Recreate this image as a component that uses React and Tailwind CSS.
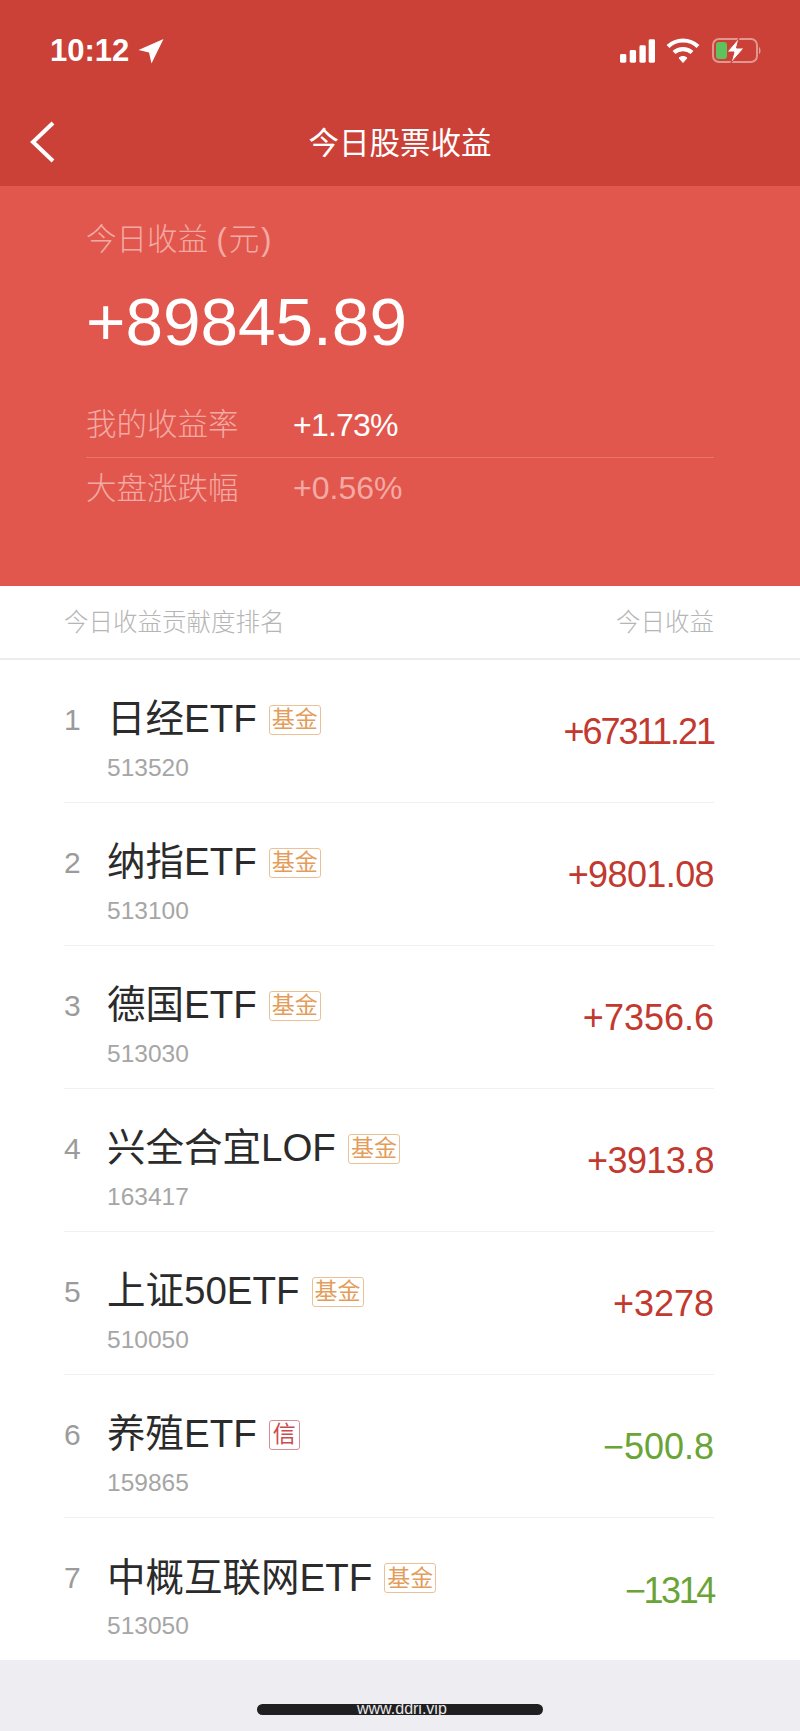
const latin = 'font-["Liberation_Sans","Noto_Sans_CJK_SC",sans-serif]';

// the 1 is narrow in the app's number font, so amounts with 1s get tighter tracking
const rows = [
    { rank: 1, name: '日经ETF', tag: '基金', code: '513520', amount: '+67311.21', tight: 'tracking-[-2px]' },
    { rank: 2, name: '纳指ETF', tag: '基金', code: '513100', amount: '+9801.08', tight: 'tracking-[-0.6px]' },
    { rank: 3, name: '德国ETF', tag: '基金', code: '513030', amount: '+7356.6' },
    { rank: 4, name: '兴全合宜LOF', tag: '基金', code: '163417', amount: '+3913.8', tight: 'tracking-[-0.6px]' },
    { rank: 5, name: '上证50ETF', tag: '基金', code: '510050', amount: '+3278' },
    { rank: 6, name: '养殖ETF', tag: '信', code: '159865', amount: '−500.8', down: true },
    { rank: 7, name: '中概互联网ETF', tag: '基金', code: '513050', amount: '−1314', down: true, tight: 'tracking-[-2.4px]' },
];

function StatusIcons() {
    return (
        <div className="flex items-center">
            <svg className="mr-[11px]" width="35" height="24" viewBox="0 0 36 24" fill="white">
                <rect x="0" y="15" width="6.5" height="9" rx="1.5" />
                <rect x="10" y="11" width="6.5" height="13" rx="1.5" />
                <rect x="20" y="6" width="6.5" height="18" rx="1.5" />
                <rect x="29.5" y="0" width="6.5" height="24" rx="1.5" />
            </svg>
            <svg className="mr-[12px]" width="34" height="25" viewBox="0 0 34 25" fill="none" stroke="white" strokeWidth="4.2">
                <path d="M2 8.5C10.5 0.5 23.5 0.5 32 8.5" />
                <path d="M8 14.5C13 10 21 10 26 14.5" />
                <path d="M13 20L17 24.5L21 20C19 18 15 18 13 20Z" fill="white" strokeWidth="1" />
            </svg>
            <svg width="50" height="25" viewBox="0 0 50 25" fill="none">
                <rect x="1" y="1" width="44" height="23" rx="6" stroke="white" strokeOpacity="0.45" strokeWidth="2" />
                <rect x="4" y="4" width="11" height="17" rx="3" fill="#5fc25c" />
                <path d="M47 9C49 10 49 15 47 16Z" fill="white" fillOpacity="0.5" />
                <path d="M27 0L15 14H22L19 25L32 10H24.5Z" fill="white" stroke="#cb4138" strokeWidth="1" />
            </svg>
        </div>
    );
}

function Row({ row, last }) {
    const orange = row.tag === '基金';
    return (
        <div className={`h-[143px] flex items-center justify-between ${last ? '' : 'border-b border-[#f1f1f1]'}`}>
            <div className="flex items-start pt-[14px]">
                <div className="w-[43px] h-[52px] flex items-center text-[30px] leading-none text-[#9b9b9b]">{row.rank}</div>
                <div>
                    <div className="h-[52px] flex items-center gap-[12px]">
                        <span className="text-[38.5px] leading-none text-[#2b2b2b]">{row.name}</span>
                        <span
                            className={`h-[30px] flex items-center justify-center rounded-[3px] border-[1.5px] text-[23px] leading-none ${
                                orange
                                    ? 'w-[52px] border-[#ecc197] text-[#e39c5a]'
                                    : 'w-[31px] border-[#d98c8f] text-[#cc4a4d]'
                            }`}
                        >
                            {row.tag}
                        </span>
                    </div>
                    <div className="mt-[7px] text-[24.5px] leading-[30px] text-[#a6a6a6]">{row.code}</div>
                </div>
            </div>
            <div className={`pt-[2px] text-[36px] leading-none ${row.tight ?? ''} ${row.down ? 'text-[#6aa437]' : 'text-[#c1392f]'}`}>
                {row.amount}
            </div>
        </div>
    );
}

export default function App() {
    return (
        <div className={`w-[800px] h-[1731px] overflow-hidden bg-[#eeeef2] ${latin}`}>
            <header className="h-[186px] bg-[#cb4138] text-white">
                <div className="h-[99px] pt-[38px] pl-[50px] pr-[38px] flex items-start justify-between">
                    <div className="flex items-center gap-[9px]">
                        <span className="text-[31px] leading-[26px] font-bold">10:12</span>
                        <svg width="26" height="26" viewBox="0 0 26 26" fill="white">
                            <path d="M25.5 1L13.5 25.5L11 14.5L0.5 12Z" />
                        </svg>
                    </div>
                    <StatusIcons />
                </div>
                <div className="relative h-[87px] flex items-start justify-center">
                    <svg className="absolute left-[29px] top-[22px]" width="26" height="42" viewBox="0 0 26 42" fill="none" stroke="white" strokeWidth="4">
                        <path d="M24 2L4 21L24 40" />
                    </svg>
                    <h1 className="mt-[24px] text-[30.5px] leading-[40px] font-normal">今日股票收益</h1>
                </div>
            </header>

            <section className="h-[400px] bg-[#e2574d] px-[86px] pt-[33px]">
                <div className="text-[30.5px] leading-[40px] font-light text-[#f3aaa4]">
                    今日收益 <span className="tracking-[2px]">(元)</span>
                </div>
                <div className="mt-[24px] text-[67.5px] leading-[78px] text-white">+89845.89</div>
                <div className="mt-[32px] h-[65px] flex items-center border-b border-[#ea736a] pb-[1px]">
                    <span className="w-[207px] text-[30.5px] leading-none font-light text-[#f3aaa4]">我的收益率</span>
                    <span className="text-[32px] leading-none tracking-[-0.8px] text-white">+1.73%</span>
                </div>
                <div className="h-[60px] flex items-center">
                    <span className="w-[207px] text-[30.5px] leading-none font-light text-[#f3aaa4]">大盘涨跌幅</span>
                    <span className="text-[32px] leading-none text-[#f3aaa4]">+0.56%</span>
                </div>
            </section>

            <div className="h-[74px] bg-white border-b-2 border-[#ececec] pl-[64px] pr-[86px] pt-[3px] flex items-center justify-between text-[24.5px] leading-none font-light text-[#b5b5b5]">
                <span>今日收益贡献度排名</span>
                <span>今日收益</span>
            </div>

            <main className="h-[1000px] bg-white pl-[64px] pr-[86px]">
                {rows.map((row, i) => (
                    <Row key={row.rank} row={row} last={i === rows.length - 1} />
                ))}
            </main>

            <div className="flex justify-center pt-[44px]">
                <div className="relative w-[286px] h-[11px] overflow-hidden rounded-full bg-[#1f1f21]">
                    <span className="absolute left-[100px] top-[-5px] text-[16px] leading-[20px] text-[#e8e8e8]">www.ddri.vip</span>
                </div>
            </div>
        </div>
    );
}
